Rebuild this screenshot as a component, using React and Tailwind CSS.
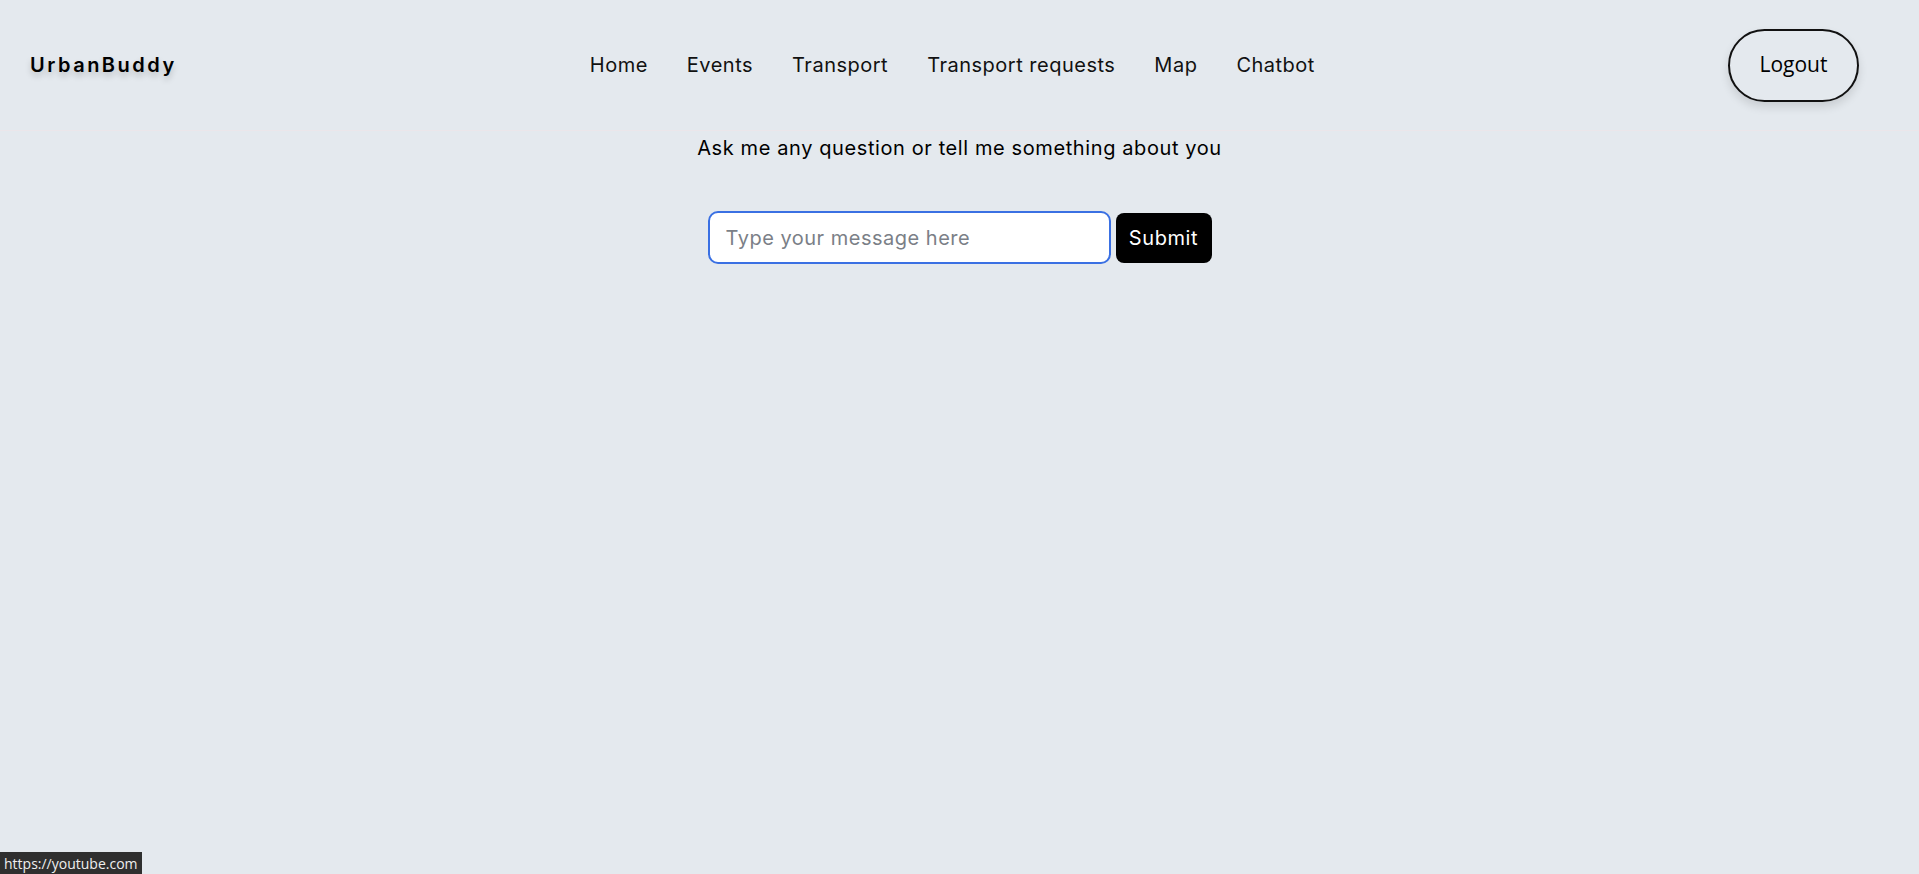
const navLinks = ['Home', 'Events', 'Transport', 'Transport requests', 'Map', 'Chatbot'];

const App = () => {
  return (
    <div className="min-h-screen bg-[#e4e9ee] text-black font-['Inter',sans-serif]">
      <header className="flex h-[130px] items-center justify-between pl-[30px] pr-[60px]">
        <h1 className="text-[20px] font-semibold tracking-[2.5px] [text-shadow:0_4px_6px_rgba(0,0,0,0.2)]">
          UrbanBuddy
        </h1>
        <nav className="flex items-center gap-[39px] text-[20px] tracking-[0.5px]">
          {navLinks.map((link) => (
            <a key={link} href="#" className="text-[#111]">
              {link}
            </a>
          ))}
        </nav>
        <button className="h-[73px] w-[131px] rounded-full border-2 border-[#111] text-[21px] font-['Open_Sans',sans-serif] shadow-[0_5px_10px_rgba(0,0,0,0.12)]">
          Logout
        </button>
      </header>

      <main className="flex flex-col items-center border-t border-[#ebe6ea]">
        <p className="mt-[2px] text-[20px] tracking-[0.6px]">Ask me any question or tell me something about you</p>
        <form className="mt-[48px] flex items-center gap-[5px]" onSubmit={(e) => e.preventDefault()}>
          <input
            autoFocus
            type="text"
            placeholder="Type your message here"
            className="h-[53px] w-[403px] rounded-[10px] border-2 border-[#3a70e3] bg-white px-[16px] text-[20px] tracking-[0.5px] outline-none placeholder:text-[#7b7f87]"
          />
          <button className="h-[50px] w-[96px] rounded-[8px] bg-black text-[20px] tracking-[0.6px] text-white">
            Submit
          </button>
        </form>
      </main>

      <div className="fixed bottom-0 left-0 flex h-[22px] items-center bg-[#2f2f2f] px-[4px] text-[14px] text-[#eee] font-['Open_Sans',sans-serif]">
        https://youtube.com
      </div>
    </div>
  );
};

export default App;
